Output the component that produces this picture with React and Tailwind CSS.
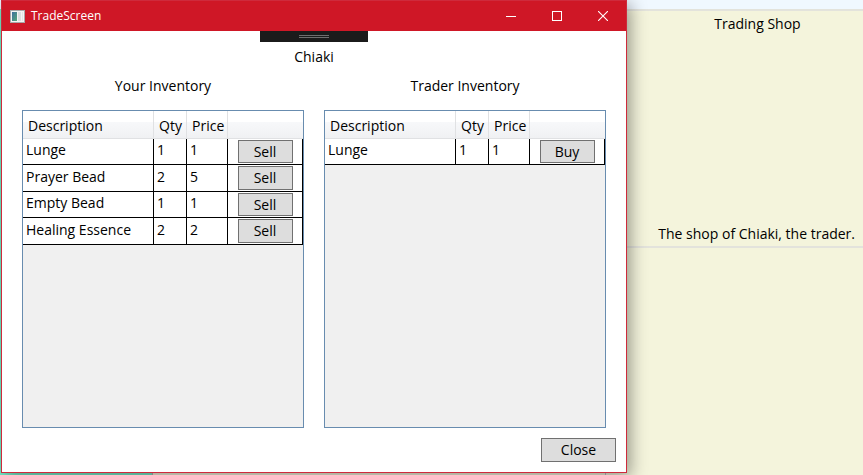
import React from "react";

const playerItems = [
  { name: "Lunge", qty: 1, price: 1 },
  { name: "Prayer Bead", qty: 2, price: 5 },
  { name: "Empty Bead", qty: 1, price: 1 },
  { name: "Healing Essence", qty: 2, price: 2 },
];

const traderItems = [{ name: "Lunge", qty: 1, price: 1 }];

const buttonStyle =
  "flex items-center justify-center border border-[#707070] bg-[#dddddd] text-sm leading-5 text-black";

const headStyle =
  "h-7 border-b border-[#e0e1e3] bg-linear-to-b from-white from-40% via-[#f7f8fa] via-42% to-[#f0f1f3] pl-[5px] pt-[3px] text-left align-middle font-normal";

const cellStyle =
  "border-r border-b border-black pt-px pl-[3px] align-top group-even:pt-[2px]";

function Inventory({ title, action, items }) {
  return (
    <section className="flex min-w-0 flex-1 flex-col">
      <h2 className="mb-[14px] text-center leading-5">{title}</h2>
      <div className="flex-1 border border-[#688caf] bg-[#f0f0f0]">
        <table
          aria-label={title}
          className="w-full table-fixed border-separate border-spacing-0 bg-white leading-5"
        >
          <colgroup>
            <col />
            <col className="w-[33px]" />
            <col className="w-[41px]" />
            <col className="w-[75px]" />
          </colgroup>
          <thead>
            <tr>
              <th className={`${headStyle} border-r`}>Description</th>
              <th className={`${headStyle} border-r`}>Qty</th>
              <th className={`${headStyle} border-r`}>Price</th>
              <th className={headStyle} aria-label={action}></th>
            </tr>
          </thead>
          <tbody>
            {items.map((item) => (
              <tr key={item.name} className="group h-[26px] even:h-[27px]">
                <td className={cellStyle}>{item.name}</td>
                <td className={cellStyle}>{item.qty}</td>
                <td className={cellStyle}>{item.price}</td>
                <td className="border-r border-b border-black p-px align-top">
                  <button
                    type="button"
                    className={`${buttonStyle} mx-auto h-[23px] w-[55px] group-even:h-6`}
                  >
                    {action}
                  </button>
                </td>
              </tr>
            ))}
          </tbody>
        </table>
      </div>
    </section>
  );
}

function TitleBar() {
  return (
    <header className="flex h-[30px] shrink-0 items-center bg-[#cf1726] text-white">
      <svg className="ml-2 shrink-0" width="15" height="13" viewBox="0 0 15 13" aria-hidden="true">
        <defs>
          <linearGradient id="pane" x1="0" y1="0" x2="1" y2="1">
            <stop offset="0" stopColor="#3f6f9f" />
            <stop offset="1" stopColor="#55a878" />
          </linearGradient>
        </defs>
        <rect x="0.5" y="0.5" width="14" height="12" fill="#f4f4f4" stroke="#a9a9a9" />
        <rect x="2" y="2" width="5" height="9" fill="url(#pane)" />
        <rect x="8" y="2" width="3" height="9" fill="#dcdedf" />
        <rect x="12" y="2" width="1" height="9" fill="#e3e5e6" />
      </svg>
      <h1 className="ml-[6px] flex-1 text-xs">TradeScreen</h1>
      <button type="button" aria-label="Minimize" className="flex h-full w-[45px] items-center justify-center">
        <svg width="11" height="10" viewBox="0 0 11 10" stroke="white">
          <path d="M0 5.5h10" />
        </svg>
      </button>
      <button type="button" aria-label="Maximize" className="flex h-full w-[46px] items-center justify-center">
        <svg width="10" height="10" viewBox="0 0 10 10" fill="none" stroke="white">
          <rect x="0.5" y="0.5" width="9" height="9" />
        </svg>
      </button>
      <button type="button" aria-label="Close window" className="flex h-full w-[46px] items-center justify-center">
        <svg width="10" height="10" viewBox="0 0 10 10" stroke="white" strokeWidth="1.1">
          <path d="M0 0l10 10M10 0L0 10" />
        </svg>
      </button>
    </header>
  );
}

function TradeWindow() {
  return (
    <main className="absolute top-0 right-[236px] bottom-[2px] left-px flex flex-col border border-[#cf2a3c] bg-white shadow-[3px_4px_16px_rgba(0,0,0,0.4)]">
      <TitleBar />
      <div className="flex h-[11px] w-[108px] shrink-0 items-center justify-center self-center bg-[#1b1b1b]">
        <div className="h-[3px] w-[30px] border-y border-[#6e6e6e]"></div>
      </div>
      <p className="mt-[5px] text-center leading-5">Chiaki</p>
      <div className="mx-5 mt-[9px] flex flex-1 gap-5">
        <Inventory title="Your Inventory" action="Sell" items={playerItems} />
        <Inventory title="Trader Inventory" action="Buy" items={traderItems} />
      </div>
      <button type="button" className={`${buttonStyle} my-[10px] mr-[10px] h-6 w-[75px] shrink-0 self-end`}>
        Close
      </button>
    </main>
  );
}

export default function App() {
  return (
    <div className="relative flex h-screen flex-col overflow-hidden bg-[#f4f4dc] font-['Open_Sans','Noto_Sans',sans-serif] text-sm text-black">
      <div className="h-[9px] shrink-0 bg-[#f0f8ff]"></div>
      <div className="flex flex-1">
        <div className="w-[152px] bg-[#78f0cc]"></div>
        <div className="flex-1 border-l border-[#c0a8b0]"></div>
        <aside className="flex w-[258px] flex-col border-l border-[#c0b8c8]">
          <section className="flex h-[239px] flex-col justify-between border-y-2 border-[#e3e3dc] pt-[3px] pb-[2px] pl-[46px]">
            <h2 className="text-center leading-5">Trading Shop</h2>
            <p className="pr-2 text-right leading-5">The shop of Chiaki, the trader.</p>
          </section>
        </aside>
      </div>
      <TradeWindow />
    </div>
  );
}
